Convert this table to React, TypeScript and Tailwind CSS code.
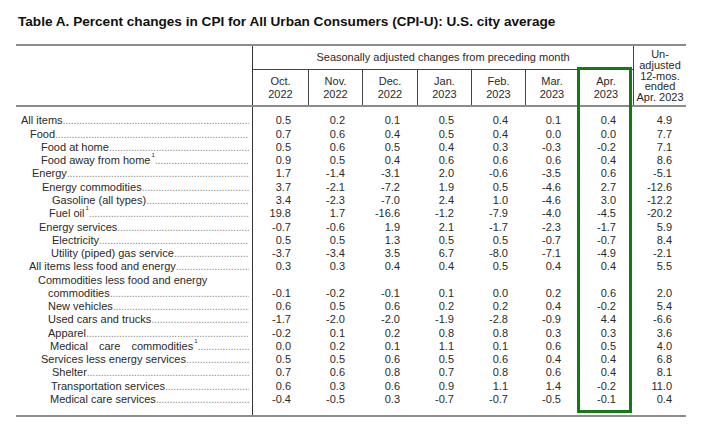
const months = [
  ["Oct.", "2022"],
  ["Nov.", "2022"],
  ["Dec.", "2022"],
  ["Jan.", "2023"],
  ["Feb.", "2023"],
  ["Mar.", "2023"],
  ["Apr.", "2023"],
];

type Row = {
  label: string;
  indent: string;
  values?: string;
  note?: boolean;
  wide?: boolean;
};

const rows: Row[] = [
  { label: "All items", indent: "pl-[5px]", values: "0.5 0.2 0.1 0.5 0.4 0.1 0.4 4.9" },
  { label: "Food", indent: "pl-[14px]", values: "0.7 0.6 0.4 0.5 0.4 0.0 0.0 7.7" },
  { label: "Food at home", indent: "pl-[25px]", values: "0.5 0.6 0.5 0.4 0.3 -0.3 -0.2 7.1" },
  { label: "Food away from home", indent: "pl-[25px]", values: "0.9 0.5 0.4 0.6 0.6 0.6 0.4 8.6", note: true },
  { label: "Energy", indent: "pl-[16px]", values: "1.7 -1.4 -3.1 2.0 -0.6 -3.5 0.6 -5.1" },
  { label: "Energy commodities", indent: "pl-[26px]", values: "3.7 -2.1 -7.2 1.9 0.5 -4.6 2.7 -12.6" },
  { label: "Gasoline (all types)", indent: "pl-[36px]", values: "3.4 -2.3 -7.0 2.4 1.0 -4.6 3.0 -12.2" },
  { label: "Fuel oil", indent: "pl-[33px]", values: "19.8 1.7 -16.6 -1.2 -7.9 -4.0 -4.5 -20.2", note: true },
  { label: "Energy services", indent: "pl-[23px]", values: "-0.7 -0.6 1.9 2.1 -1.7 -2.3 -1.7 5.9" },
  { label: "Electricity", indent: "pl-[36px]", values: "0.5 0.5 1.3 0.5 0.5 -0.7 -0.7 8.4" },
  { label: "Utility (piped) gas service", indent: "pl-[35px]", values: "-3.7 -3.4 3.5 6.7 -8.0 -7.1 -4.9 -2.1" },
  { label: "All items less food and energy", indent: "pl-[13px]", values: "0.3 0.3 0.4 0.4 0.5 0.4 0.4 5.5" },
  { label: "Commodities less food and energy", indent: "pl-[22px]" },
  { label: "commodities", indent: "pl-[32px]", values: "-0.1 -0.2 -0.1 0.1 0.0 0.2 0.6 2.0" },
  { label: "New vehicles", indent: "pl-[32px]", values: "0.6 0.5 0.6 0.2 0.2 0.4 -0.2 5.4" },
  { label: "Used cars and trucks", indent: "pl-[32px]", values: "-1.7 -2.0 -2.0 -1.9 -2.8 -0.9 4.4 -6.6" },
  { label: "Apparel", indent: "pl-[32px]", values: "-0.2 0.1 0.2 0.8 0.8 0.3 0.3 3.6" },
  { label: "Medical care commodities", indent: "pl-[34px]", values: "0.0 0.2 0.1 1.1 0.1 0.6 0.5 4.0", note: true, wide: true },
  { label: "Services less energy services", indent: "pl-[25px]", values: "0.5 0.5 0.6 0.5 0.6 0.4 0.4 6.8" },
  { label: "Shelter", indent: "pl-[36px]", values: "0.7 0.6 0.8 0.7 0.8 0.6 0.4 8.1" },
  { label: "Transportation services", indent: "pl-[35px]", values: "0.6 0.3 0.6 0.9 1.1 1.4 -0.2 11.0" },
  { label: "Medical care services", indent: "pl-[34px]", values: "-0.4 -0.5 0.3 -0.7 -0.7 -0.5 -0.1 0.4" },
];

const cols = "grid grid-cols-[237px_55px_54px_55px_54px_54px_53px_55px_53px]";
const dots = ".".repeat(80);

export default function App() {
  return (
    <div className="w-[709px] h-[432px] bg-white text-[#2a2a2a] font-['Liberation_Sans',Arial,sans-serif] overflow-hidden">
      <h1 className="pl-[18px] pt-[13px] text-[13.6px] leading-[17px] font-bold text-[#111]">
        Table A. Percent changes in CPI for All Urban Consumers (CPI-U): U.S. city average
      </h1>

      <div className="relative ml-[16px] mt-[14px] w-[670px] text-[11px]">
        {/* Header */}
        <div className={`${cols} grid-rows-[24px_35px] border-t-2 border-b-2 border-[#8c8c8c]`}>
          <div className="row-span-2 border-r border-[#333]" />
          <div className="col-span-7 flex items-center justify-center border-b border-[#444] leading-[13px]">
            Seasonally adjusted changes from preceding month
          </div>
          <div className="row-span-2 flex flex-col items-center justify-center border-l border-[#444] leading-[10.8px] pt-[1px]">
            <span>Un-</span>
            <span>adjusted</span>
            <span>12-mos.</span>
            <span>ended</span>
            <span>Apr. 2023</span>
          </div>
          {months.map(([m, y], i) => (
            <div
              key={m}
              className={`flex flex-col items-center justify-center leading-[13px] pt-[1px] ${
                i > 0 ? "border-l border-[#444]" : ""
              }`}
            >
              <span>{m}</span>
              <span>{y}</span>
            </div>
          ))}
        </div>

        {/* Body */}
        <div className="border-b-2 border-[#8c8c8c]">
          <div className={cols}>
            <div className="h-[7.4px] border-r border-[#333]" />
          </div>
          {rows.map((r) => (
            <div key={r.label} className={`${cols} h-[13.27px] leading-[13.27px]`}>
              <div className={`flex items-baseline min-w-0 border-r border-[#333] pr-[3px] ${r.indent}`}>
                <span className={`whitespace-nowrap ${r.wide ? "[word-spacing:8px]" : ""}`}>
                  {r.label}
                  {r.note && <sup className="text-[6px] leading-none align-[4px] ml-[1px]">1</sup>}
                </span>
                {r.values && (
                  <span className="flex-1 min-w-0 overflow-hidden whitespace-nowrap text-[#8a8a8a] tracking-[-0.3px]">
                    {dots}
                  </span>
                )}
              </div>
              {(r.values ? r.values.split(" ") : Array(8).fill("")).map((v, i) => (
                <div key={i} className={`text-right ${i === 7 ? "pr-[14px]" : "pr-[17px]"}`}>
                  {v}
                </div>
              ))}
            </div>
          ))}
          <div className={cols}>
            <div className="h-[9.2px] border-r border-[#333]" />
          </div>
        </div>

        {/* April highlight */}
        <div className="absolute left-[561px] top-[23px] w-[55px] h-[346px] border-[3px] border-[#157a15] pointer-events-none" />
      </div>
    </div>
  );
}
